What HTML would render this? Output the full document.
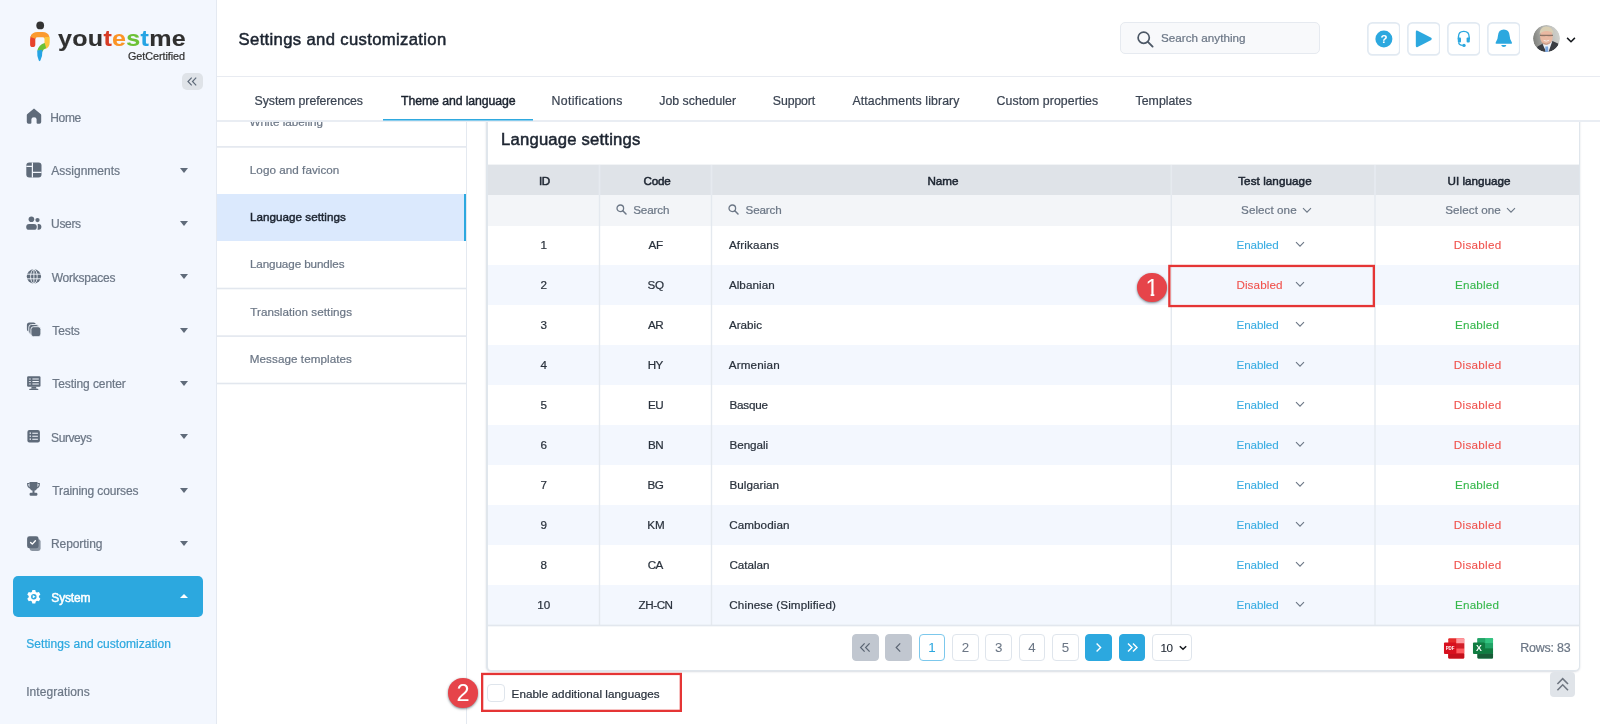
<!DOCTYPE html>
<html lang="en">
<head>
<meta charset="utf-8">
<title>Settings and customization - Language settings</title>
<style>
*{box-sizing:border-box;margin:0;padding:0}
html,body{width:1600px;height:724px;overflow:hidden;background:#fff}
body{position:relative;will-change:transform;-webkit-text-stroke:0.22px;font-family:"Liberation Sans",Arial,sans-serif;font-size:11.67px;color:#1f2733}
a{text-decoration:none;color:inherit}
i{font-style:normal}
.abs{position:absolute}
#sidebar{position:absolute;left:0;top:0;width:217px;height:724px;background:#f3f7fe;border-right:1px solid #e4e9f1}
#brand{position:absolute;left:57.6px;top:24.7px;font-size:22px;font-weight:bold;line-height:28px;letter-spacing:0.25px;white-space:nowrap;transform:scaleX(1.14);transform-origin:0 0;-webkit-text-stroke:0.1px}
#brand .k{color:#303030}#brand .r{color:#d63b25}#brand .o{color:#fb9426}#brand .g{color:#6cc136}#brand .b{color:#25a4e4}
#brand2{position:absolute;left:128px;top:50.4px;font-size:10.8px;line-height:13px;letter-spacing:-0.05px;color:#333;white-space:nowrap}
#collapse{position:absolute;left:182px;top:73px;width:21px;height:17px;border-radius:5px;background:#dfe3e8}
#collapse svg{display:block}
.nav{position:absolute;left:13px;width:190px;height:40px;border-radius:5px;display:block}
.nav .ic{position:absolute}
.nav .lb{position:absolute;left:38px;top:12.5px;line-height:16px;font-size:12px;color:#6c7786;white-space:nowrap}
.nav .ar{position:absolute;left:166.5px;top:17.2px;width:0;height:0;border-left:4.5px solid transparent;border-right:4.5px solid transparent;border-top:5px solid #5f6b7a}
.nav.act{background:#2ca8df;height:40.7px}
.nav.act .lb{top:14px;color:#fff;-webkit-text-stroke:0.5px #fff}
.nav.act .ar{top:18.2px;border-top:none;border-bottom:4.5px solid #fff}
.sub{position:absolute;left:26.5px;line-height:16px;font-size:12px;color:#6c7786;white-space:nowrap}
.sub.on{color:#2ca8df}
#topbar{position:absolute;left:217px;top:0;width:1383px;height:77px;background:#fff}
#ptitle{position:absolute;left:21px;top:27.5px;font-size:16.67px;line-height:24px;font-weight:normal;-webkit-text-stroke:0.5px #1c2430;color:#1c2430;white-space:nowrap}
#gsearch{position:absolute;left:903px;top:22px;width:200px;height:32px;border:1px solid #e6eaf0;border-radius:5px;background:#f8f9fb}
#gsearch>span{position:absolute;left:39.5px;top:7px;line-height:16px;color:#6c7786;white-space:nowrap}
.ibtn{position:absolute;top:21.9px;width:33.6px;height:33.8px;display:block}
.ibtn svg{position:absolute;left:0;top:0;width:33.6px;height:33.8px}
#avatar{position:absolute;left:1316px;top:25px;width:27px;height:27px;border-radius:50%;overflow:hidden}
#avatar svg{display:block}
#tabs{position:absolute;left:217px;top:77px;width:1383px;height:45px;background:#fff}
.tab{position:absolute;top:0;height:45px;line-height:49.4px;font-size:12.3px;color:#3b4452;white-space:nowrap}
.tab.on{color:#1c2430;-webkit-text-stroke:0.45px #1c2430}
#tabline{position:absolute;left:165.5px;top:42px;width:150.5px;height:1px;background:#2fa9df;box-shadow:0 1px 0 #86cced}
#menu{position:absolute;left:217px;top:122px;width:250px;height:602px;background:#fff;border-right:1px solid #e4e9f0;overflow:hidden}
.mi{position:absolute;left:0;width:249px;height:47px;display:block}
.mi>span{position:absolute;left:33px;top:14.8px;line-height:16px;color:#6c7786;white-space:nowrap}
.mi.on{background:#dbe9fd;border-right:2px solid #2ca8df}
.mi.on>span{color:#1c2430;-webkit-text-stroke:0.45px #1c2430}
#card{position:absolute;left:486px;top:100px;width:1094px;border-left-width:2px !important;height:571px;background:#fff;border:1px solid #e0e6ec;border-radius:5px;box-shadow:0 1px 2px rgba(60,80,110,.2);z-index:0}
#tabs,#topbar{z-index:2}
#ctitle{position:absolute;left:13px;top:27px;font-size:16.67px;line-height:24px;font-weight:normal;-webkit-text-stroke:0.5px #1c2430;color:#1c2430;white-space:nowrap}
table{position:absolute;left:0;top:64px;border-collapse:separate;border-spacing:0;table-layout:fixed;width:1091px}
th,td{padding:0;white-space:nowrap;overflow:hidden}
tr.hd th{height:30px;background:#dfe3e8;font-weight:normal;-webkit-text-stroke:0.5px #1c2430;color:#1c2430;text-align:center;line-height:28px;padding-top:1.8px}
tr.fl td{height:31px;background:#f3f5f8;color:#6c7786;line-height:28px;padding-top:0;padding-bottom:0.5px}
tbody td{height:40px;line-height:37px;padding-bottom:1px;color:#2a323d}
tbody tr:first-child td{height:39px;line-height:36px;padding-bottom:2px}
tr.ev td{background:#f3f7fe}
td.c{text-align:center}
td.n{padding-left:17px}
.en{color:#3aade2}.dis{color:#f0524d}.uen{color:#35b84b}
.en,.dis,.uen{-webkit-text-stroke:0.1px}
#pager{position:absolute;left:0;top:525px;width:1091px;height:45px}
.pb{position:absolute;top:8px;width:26.67px;height:26.67px;border-radius:4px;border:1px solid #dfe5ec;text-align:center;line-height:25px;color:#6c7786;font-size:13.3px;display:block;background:#fff;-webkit-text-stroke:0.05px}
.pb svg{position:absolute;left:-1px;top:-1px}
.pb.g{background:#c1c7d0;border-color:#c1c7d0}
.pb.b{background:#2ca8df;border-color:#2ca8df}
.pb.cur{border-color:#7cc8ec;color:#2ca8df}
#rpp{position:absolute;left:664px;top:8px;width:40px;height:26.67px;border:1px solid #dfe5ec;border-radius:4px}
#rpp>span{position:absolute;left:7.4px;top:0;line-height:25px;color:#1f2733;letter-spacing:-0.3px;-webkit-text-stroke:0.1px}
#rpp svg{position:absolute;left:25.4px;top:9.3px}
#rows{position:absolute;left:1033px;top:13.6px;font-size:12.4px;line-height:16px;color:#6c7786;white-space:nowrap}
#addl{position:absolute;left:487px;top:684px;height:18px;display:block}
#addl .cb{position:absolute;left:0;top:0;width:18px;height:18px;border:1px solid #dfe5ec;border-radius:4px;background:#fff}
#addl>span{position:absolute;left:25px;top:1.6px;line-height:16px;color:#2a323d;white-space:nowrap}
#totop{position:absolute;left:1550px;top:672px;width:25px;height:25px;border-radius:4px;background:#e0e4e9;display:block}
#totop svg{display:block}
.hl{position:absolute;z-index:5}
.badge{position:absolute;width:29.6px;height:29.6px;border-radius:50%;background:#e6444a;box-shadow:0 1px 2.5px rgba(20,40,50,.55);z-index:6;color:#fff;text-align:center;font-size:23.5px;line-height:30px;-webkit-text-stroke:0}
.badge span{display:inline-block}
.badge .one{clip-path:polygon(0 0,100% 0,100% 72%,68% 72%,68% 100%,40% 100%,40% 72%,0 72%)}
.si{display:inline-block;vertical-align:middle;margin:0 6.9px 0 0.8px;position:relative;top:-1.6px}
.cv{display:inline-block;vertical-align:middle}
td.s1,td.s2{padding-left:15.8px}
td.sel{padding-left:69px}
td.sel.u{padding-left:69.5px}
td.sel .cv{margin:-0.4px 0 0 5.7px}
td.tl{padding-left:64.5px}
td.tl span{display:inline-block;width:59.5px}
td.tl .cv{margin-top:-2px}
.ln{position:absolute;display:block}
</style>
</head>
<body>
<aside id="sidebar">
<div id="logo">
<svg class="abs" style="left:26px;top:18px" width="28" height="46" viewBox="26 18 28 46" aria-hidden="true">
<circle cx="40.2" cy="25.4" r="3.9" fill="#333"/>
<path d="M32.7 44.4V39.4Q32.7 37.6 33.5 36.6" stroke="#e8432a" stroke-width="5.2" fill="none" stroke-linecap="round"/>
<path d="M32.9 37.9Q33.9 34.7 37.6 34.7H42.6Q46 34.7 47 37.6" stroke="#fb9a2f" stroke-width="5.2" fill="none"/>
<path d="M47.1 36.9V42.4Q47.1 46 43.6 46.7" stroke="#fdc53a" stroke-width="5.2" fill="none"/>
<path d="M45.4 45.4Q41 46.6 39.8 51.2" stroke="#6cc136" stroke-width="5.2" fill="none"/>
<path d="M37.2 50.6L42.5 49.8Q42.6 56 40.4 60.4L39.6 61.2L38.8 60.4Q36.8 56 37.2 50.6Z" fill="#25a4e4"/>
</svg>
<div id="brand"><span class="k">you</span><span class="r">t</span><span class="o">e</span><span class="g">s</span><span class="b">t</span><span class="k">me</span></div>
<div id="brand2">GetCertified</div>
</div>
<div id="collapse"><svg width="21" height="17" viewBox="0 0 21 17" aria-hidden="true"><path d="M9.7 4.7L6 8.5L9.7 12.3M14.2 4.7L10.5 8.5L14.2 12.3" stroke="#5f6b7a" stroke-width="1.2" fill="none"/></svg></div>
<nav>
<a class="nav" style="top:97px"><svg class="ic" style="left:13.2px;top:10.9px" width="16" height="16" viewBox="0 0 16 16" aria-hidden="true"><path fill="#5f6b7a" d="M8 0.6 L14.6 5.9 Q15.2 6.4 15.2 7.2 V14 Q15.2 15.7 13.5 15.7 H11.6 Q10.6 15.7 10.6 14.7 V11.3 Q10.6 9.2 8 9.2 Q5.4 9.2 5.4 11.3 V14.7 Q5.4 15.7 4.4 15.7 H2.5 Q0.8 15.7 0.8 14 V7.2 Q0.8 6.4 1.4 5.9 Z"/></svg><span class="lb"><span style="letter-spacing:-0.33px;position:relative;left:-0.8px">Home</span></span></a>
<a class="nav" style="top:150.33px"><svg class="ic" style="left:13px;top:12px" width="16" height="16" viewBox="0 0 16 16" aria-hidden="true"><rect x="0.3" y="0.4" width="15.2" height="15.2" rx="3" fill="#5f6b7a"/><path d="M6.4 0.4V15.6M0.3 4.4H6.4M6.4 10.4H15.5" stroke="#f3f7fe" stroke-width="1.2" fill="none"/></svg><span class="lb"><span style="position:relative;left:0.3px">Assignments</span></span><i class=ar></i></a>
<a class="nav" style="top:203.67px"><svg class="ic" style="left:13px;top:12px" width="16" height="16" viewBox="0 0 16 16" aria-hidden="true"><circle cx="5.4" cy="3.3" r="2.8" fill="#5f6b7a"/><circle cx="11.5" cy="4.1" r="2.15" fill="#5f6b7a"/><rect x="0.2" y="7.9" width="10.6" height="5.9" rx="2.9" fill="#5f6b7a"/><path fill="#5f6b7a" d="M11.7 7.9H12.6Q15.4 7.9 15.4 10.85Q15.4 13.8 12.6 13.8H11.5Q11.8 12.4 11.8 10.85Q11.8 9.3 11.7 7.9Z"/></svg><span class="lb"><span style="letter-spacing:-0.35px;position:relative;left:0.1px">Users</span></span><i class=ar></i></a>
<a class="nav" style="top:257px"><svg class="ic" style="left:13px;top:12px" width="16" height="16" viewBox="0 0 16 16" aria-hidden="true"><circle cx="7.9" cy="7.5" r="7.15" fill="#5f6b7a"/><path d="M0.7 5.2H15.1M0.7 9.8H15.1M7.9 0.3V14.7" stroke="#f3f7fe" stroke-width="0.9" fill="none"/><ellipse cx="7.9" cy="7.5" rx="3.3" ry="7.15" stroke="#f3f7fe" stroke-width="0.9" fill="none"/></svg><span class="lb"><span style="letter-spacing:-0.23px;position:relative;left:0.7px">Workspaces</span></span><i class=ar></i></a>
<a class="nav" style="top:310.33px"><svg class="ic" style="left:13px;top:12px" width="16" height="16" viewBox="0 0 16 16" aria-hidden="true"><rect x="0.9" y="0.5" width="9" height="9" rx="2.5" fill="#5f6b7a"/><rect x="2.8" y="2.5" width="10" height="10" rx="2.7" fill="#5f6b7a" stroke="#f3f7fe" stroke-width="0.9"/><rect x="4.9" y="4.7" width="10" height="10" rx="2.7" fill="#5f6b7a" stroke="#f3f7fe" stroke-width="0.9"/></svg><span class="lb"><span style="letter-spacing:-0.11px;position:relative;left:1.3px">Tests</span></span><i class=ar></i></a>
<a class="nav" style="top:363.67px"><svg class="ic" style="left:13px;top:12px" width="16" height="16" viewBox="0 0 16 16" aria-hidden="true"><rect x="1.1" y="0.2" width="13.4" height="10.6" rx="1.2" fill="#5f6b7a"/><path d="M6.4 3H12.8M6.4 5.5H12.8M6.4 8H12.8" stroke="#f3f7fe" stroke-width="1.1"/><path d="M2.9 3H5M2.9 5.5H5M2.9 8H5" stroke="#f3f7fe" stroke-width="1.1" stroke-dasharray="0.9 0.5"/><path fill="#5f6b7a" d="M5.6 10.8H10L10.5 12.8H5.1Z"/><rect x="3.2" y="12.7" width="9.2" height="1.4" rx="0.7" fill="#5f6b7a"/></svg><span class="lb"><span style="letter-spacing:-0.09px;position:relative;left:1.3px">Testing center</span></span><i class=ar></i></a>
<a class="nav" style="top:417px"><svg class="ic" style="left:13px;top:12px" width="16" height="16" viewBox="0 0 16 16" aria-hidden="true"><rect x="1.4" y="1" width="12.5" height="12.4" rx="2" fill="#5f6b7a"/><path d="M6.3 4.2H11.9M6.3 7.2H11.9M6.3 10.2H11.9" stroke="#f3f7fe" stroke-width="1.1"/><path d="M3.6 4.2H5M3.6 7.2H5M3.6 10.2H5" stroke="#f3f7fe" stroke-width="1.2"/></svg><span class="lb"><span style="letter-spacing:-0.42px;position:relative;left:0.1px">Surveys</span></span><i class=ar></i></a>
<a class="nav" style="top:470.33px"><svg class="ic" style="left:13px;top:12px" width="16" height="16" viewBox="0 0 16 16" aria-hidden="true"><path fill="#5f6b7a" d="M3.5 0H11.5V4.2Q11.5 8.4 7.5 8.8Q3.5 8.4 3.5 4.2Z"/><path d="M3.5 1.5H1.7Q1.5 5.4 4.6 6.1M11.5 1.5H13.3Q13.5 5.4 10.4 6.1" stroke="#5f6b7a" stroke-width="1.2" fill="none"/><rect x="6.5" y="8.2" width="2" height="2.8" fill="#5f6b7a"/><rect x="3.6" y="10.8" width="7.8" height="2.9" rx="1.2" fill="#5f6b7a"/></svg><span class="lb"><span style="letter-spacing:-0.14px;position:relative;left:1.3px">Training courses</span></span><i class=ar></i></a>
<a class="nav" style="top:523.67px"><svg class="ic" style="left:13px;top:12px" width="16" height="16" viewBox="0 0 16 16" aria-hidden="true"><rect x="3.6" y="3.2" width="11" height="11.8" rx="2.4" fill="#8a94a1"/><rect x="1.1" y="0.3" width="11.5" height="12" rx="2.4" fill="#5f6b7a"/><path d="M4.6 6.4L6.3 8.1L9.4 4.7" stroke="#fff" stroke-width="1.4" fill="none" stroke-linecap="round" stroke-linejoin="round"/></svg><span class="lb"><span style="letter-spacing:-0.06px;position:relative;left:-0.1px">Reporting</span></span><i class=ar></i></a>
<a class="nav act" style="top:576.3px"><svg class="ic" style="left:13px;top:12.7px" width="16" height="16" viewBox="0 0 16 16" aria-hidden="true"><g transform="translate(-0.5 -0.65) scale(1.04)"><path fill="#fff" fill-rule="evenodd" d="M6.6 0.8H9.4L9.9 2.7L11 3.3L12.9 2.8L14.3 5.2L12.9 6.6V7.9L14.3 9.3L12.9 11.7L11 11.2L9.9 11.8L9.4 13.7H6.6L6.1 11.8L5 11.2L3.1 11.7L1.7 9.3L3.1 7.9V6.6L1.7 5.2L3.1 2.8L5 3.3L6.1 2.7ZM8 4.6A2.65 2.65 0 1 0 8 9.9A2.65 2.65 0 1 0 8 4.6Z" transform="translate(0 0.75)"/><path fill="#fff" d="M7 6.4L9.6 8L7 9.6Z"/></g></svg><span class="lb"><span style="letter-spacing:-0.17px;position:relative;left:0.3px">System</span></span><i class="ar"></i></a>
<a class="sub on" style="top:636.4px"><span style="letter-spacing:0.05px;position:relative;left:-0.2px">Settings and customization</span></a>
<a class="sub" style="top:683.5px"><span style="letter-spacing:0.07px;position:relative;left:-0.3px">Integrations</span></a>
</nav>
</aside>
<header id="topbar">
<h1 id="ptitle"><span style="letter-spacing:0.34px;position:relative;left:0.6px">Settings and customization</span></h1>
<div id="gsearch"><svg class="abs" style="left:15px;top:7px" width="19" height="19" viewBox="0 0 19 19" aria-hidden="true"><circle cx="7.7" cy="7.7" r="5.6" stroke="#4d5866" stroke-width="1.7" fill="none"/><path d="M11.9 11.9L16.6 16.6" stroke="#4d5866" stroke-width="1.9" stroke-linecap="round"/></svg><span><span style="letter-spacing:0.03px;position:relative;left:0.4px">Search anything</span></span></div>
<a class="ibtn" style="left:1149.7px"><svg viewBox="0 0 33.6 33.8" aria-hidden="true"><rect x="0.85" y="0.85" width="31.9" height="32.1" rx="4.6" fill="#fff" stroke="#e2eaf2" stroke-width="1.7"/><circle cx="16.9" cy="16.9" r="8.5" fill="#2ca8df"/><text x="16.9" y="20.9" text-anchor="middle" font-family="Liberation Sans, sans-serif" font-weight="bold" font-size="11.5" fill="#fff">?</text></svg></a>
<a class="ibtn" style="left:1189.7px"><svg viewBox="0 0 33.6 33.8" aria-hidden="true"><rect x="0.85" y="0.85" width="31.9" height="32.1" rx="4.6" fill="#fff" stroke="#e2eaf2" stroke-width="1.7"/><path d="M8.8 10Q8.8 8 10.6 8.8L24.2 15.8Q25.4 16.9 24.2 18L10.6 25Q8.8 25.8 8.8 23.8Z" fill="#2ca8df"/></svg></a>
<a class="ibtn" style="left:1229.7px"><svg viewBox="0 0 33.6 33.8" aria-hidden="true"><rect x="0.85" y="0.85" width="31.9" height="32.1" rx="4.6" fill="#fff" stroke="#e2eaf2" stroke-width="1.7"/><path d="M11.4 17.6V15.2Q11.4 9.4 16.8 9.4Q22.2 9.4 22.2 15.2V17.6" stroke="#2ca8df" stroke-width="1.4" fill="none"/><rect x="10.8" y="15.4" width="3.2" height="5.2" rx="1" fill="#2ca8df"/><rect x="19.6" y="15.4" width="3.2" height="5.2" rx="1" fill="#2ca8df"/><path d="M11.6 20.4Q11.8 23.2 15.8 23.4" stroke="#2ca8df" stroke-width="1.2" fill="none"/><circle cx="17" cy="23.4" r="1.7" fill="#2ca8df"/></svg></a>
<a class="ibtn" style="left:1269.7px"><svg viewBox="0 0 33.6 33.8" aria-hidden="true"><rect x="0.85" y="0.85" width="31.9" height="32.1" rx="4.6" fill="#fff" stroke="#e2eaf2" stroke-width="1.7"/><path d="M16.8 7.6Q22.2 7.6 22.6 13.6Q22.8 18.2 24.9 20.4Q25.5 21.8 24.1 21.8H9.5Q8.1 21.8 8.7 20.4Q10.8 18.2 11 13.6Q11.4 7.6 16.8 7.6Z" fill="#2ca8df"/><path d="M14.2 23H19.4Q19 25 16.8 25Q14.6 25 14.2 23Z" fill="#2ca8df"/></svg></a>
<div id="avatar"><svg width="27" height="27" viewBox="0 0 27 27" aria-hidden="true"><defs><clipPath id="avc"><circle cx="13.5" cy="13.5" r="13.4"/></clipPath><linearGradient id="avg" x1="0" y1="0.5" x2="1" y2="0.3"><stop offset="0" stop-color="#7f807c"/><stop offset="0.45" stop-color="#b5b6b2"/><stop offset="1" stop-color="#d2d3cf"/></linearGradient><filter id="avb" x="-10%" y="-10%" width="120%" height="120%"><feGaussianBlur stdDeviation="0.55"/></filter></defs><g clip-path="url(#avc)"><rect width="27" height="27" fill="url(#avg)"/><g filter="url(#avb)"><path d="M3 27L4.5 21.5L10 18.5L13 24L19.5 16L25 18.5L27 27Z" fill="#3b3d43"/><path d="M9.6 19L13.2 27H15.5L19.2 16.6L14 20Z" fill="#eef1f6"/><path d="M12.4 21.4H15L15.4 27H12.2Z" fill="#7aa6e0"/><ellipse cx="13.4" cy="11.6" rx="6.3" ry="8.2" fill="#e9b9a2"/><path d="M6.6 9.6Q6.4 2.4 12.6 1.6Q19.6 1.2 20.6 8.8Q18 5.6 13.4 6Q8.8 6 6.6 9.6Z" fill="#d9cfb4"/><path d="M7 10.3H20" stroke="#6b5a50" stroke-width="0.9"/><path d="M8.2 10.6H12.2M14.6 10.6H18.6" stroke="#8d7466" stroke-width="1.4" opacity="0.6"/><path d="M10.6 15.4Q13.4 17 16.2 15.2" stroke="#f7ece6" stroke-width="1" fill="none"/><path d="M9.4 17.8Q13 20.6 17.4 17.6" stroke="#b98a78" stroke-width="1" fill="none" opacity="0.7"/></g></g></svg></div>
<svg class="abs" style="left:1347.6px;top:34.6px" width="12" height="10" viewBox="0 0 12 10" aria-hidden="true"><path d="M2.1 2.9L6 6.7L9.9 2.9" stroke="#15181d" stroke-width="1.5" fill="none"/></svg>
<i class="ln" style="left:0px;top:76px;width:1383px;height:1px;background:rgba(230,234,240,0.93)"></i><i class="ln" style="left:0px;top:77px;width:1383px;height:1px;background:rgba(230,234,240,0.73)"></i>
</header>
<nav id="tabs">
<a class="tab" style="left:37.7px"><span style="letter-spacing:-0.06px;position:relative;left:-0.1px">System preferences</span></a>
<a class="tab on" style="left:183.3px"><span style="letter-spacing:-0.09px;position:relative;left:0.7px">Theme and language</span></a>
<a class="tab" style="left:334.9px"><span style="letter-spacing:0.32px;position:relative;left:-0.3px">Notifications</span></a>
<a class="tab" style="left:442.0px"><span style="letter-spacing:0.01px;position:relative;left:0.3px">Job scheduler</span></a>
<a class="tab" style="left:555.8px"><span style="letter-spacing:-0.10px">Support</span></a>
<a class="tab" style="left:635.5px"><span style="letter-spacing:0.10px;position:relative;left:-0.1px">Attachments library</span></a>
<a class="tab" style="left:779.6px"><span style="letter-spacing:0.07px">Custom properties</span></a>
<a class="tab" style="left:918.0px"><span style="letter-spacing:0.02px;position:relative;left:0.6px">Templates</span></a>
<i class="ln" style="left:0px;top:43px;width:1383px;height:1px;background:rgba(228,233,240,0.83)"></i><i class="ln" style="left:0px;top:44px;width:1383px;height:1px;background:rgba(228,233,240,0.83)"></i>
<i id="tabline"></i>
</nav>
<div id="menu">
<a class="mi" style="top:-22.4px"><span><span style="letter-spacing:0.02px;position:relative;left:-0.5px">White labeling</span></span></a>
<a class="mi" style="top:25.0px"><span><span style="letter-spacing:0.05px;position:relative;left:-0.2px">Logo and favicon</span></span></a>
<a class="mi on" style="top:72.0px"><span><span style="letter-spacing:0.04px;position:relative;left:-0.1px">Language settings</span></span></a>
<a class="mi" style="top:119.7px"><span><span style="letter-spacing:-0.09px;position:relative;left:-0.1px">Language bundles</span></span></a>
<a class="mi" style="top:167.0px"><span><span style="letter-spacing:0.06px;position:relative;left:0.2px">Translation settings</span></span></a>
<a class="mi" style="top:214.4px"><span><span style="letter-spacing:0.06px;position:relative;left:-0.2px">Message templates</span></span></a>
<i class="ln" style="left:0px;top:24px;width:249px;height:1px;background:rgba(226,231,238,0.90)"></i><i class="ln" style="left:0px;top:25px;width:249px;height:1px;background:rgba(226,231,238,0.70)"></i>
<i class="ln" style="left:0px;top:165px;width:249px;height:1px;background:rgba(226,231,238,0.30)"></i><i class="ln" style="left:0px;top:166px;width:249px;height:1px;background:rgba(226,231,238,1.00)"></i><i class="ln" style="left:0px;top:167px;width:249px;height:1px;background:rgba(226,231,238,0.30)"></i>
<i class="ln" style="left:0px;top:213px;width:249px;height:1px;background:rgba(226,231,238,0.70)"></i><i class="ln" style="left:0px;top:214px;width:249px;height:1px;background:rgba(226,231,238,0.90)"></i>
<i class="ln" style="left:0px;top:260px;width:249px;height:1px;background:rgba(226,231,238,0.30)"></i><i class="ln" style="left:0px;top:261px;width:249px;height:1px;background:rgba(226,231,238,1.00)"></i><i class="ln" style="left:0px;top:262px;width:249px;height:1px;background:rgba(226,231,238,0.30)"></i>
</div>
<section id="card">
<h2 id="ctitle"><span style="letter-spacing:0.19px;position:relative;left:0.1px">Language settings</span></h2>
<table>
<colgroup><col style="width:111.5px"><col style="width:112px"><col style="width:459.8px"><col style="width:203.7px"><col style="width:204px"></colgroup>
<thead>
<tr class="hd"><th><span style="letter-spacing:-0.44px;position:relative;left:0.7px">ID</span></th><th><span style="letter-spacing:-0.25px;position:relative;left:1.5px">Code</span></th><th><span style="letter-spacing:-0.01px;position:relative;left:1.6px">Name</span></th><th><span style="letter-spacing:0.07px;position:relative;left:1.8px">Test language</span></th><th><span style="letter-spacing:0.01px;position:relative;left:2.1px">UI language</span></th></tr>
<tr class="fl"><td></td><td class="s1"><svg class="si" width="11" height="11" viewBox="0 0 11 11" aria-hidden="true"><circle cx="4.3" cy="4.3" r="3.3" stroke="#6c7786" stroke-width="1.3" fill="none"/><path d="M6.8 6.8L10 10" stroke="#6c7786" stroke-width="1.5" stroke-linecap="round"/></svg><span style="letter-spacing:-0.12px;position:relative;left:-0.8px">Search</span></td><td class="s2"><svg class="si" width="11" height="11" viewBox="0 0 11 11" aria-hidden="true"><circle cx="4.3" cy="4.3" r="3.3" stroke="#6c7786" stroke-width="1.3" fill="none"/><path d="M6.8 6.8L10 10" stroke="#6c7786" stroke-width="1.5" stroke-linecap="round"/></svg><span style="letter-spacing:-0.18px;position:relative;left:-0.4px">Search</span></td><td class="sel"><span style="letter-spacing:0.05px;position:relative;left:0.8px">Select one</span><svg class="cv" width="10" height="7" viewBox="0 0 10 7" aria-hidden="true"><path d="M1 1.2L5 5.2L9 1.2" stroke="#6c7786" stroke-width="1.1" fill="none"/></svg></td><td class="sel u"><span style="letter-spacing:0.04px;position:relative;left:0.8px">Select one</span><svg class="cv" width="10" height="7" viewBox="0 0 10 7" aria-hidden="true"><path d="M1 1.2L5 5.2L9 1.2" stroke="#6c7786" stroke-width="1.1" fill="none"/></svg></td></tr>
</thead>
<tbody>
<tr class="od"><td class="c">1</td><td class="c"><span style="letter-spacing:-0.45px;position:relative;left:0.1px">AF</span></td><td class="n"><span style="letter-spacing:0.16px;position:relative;left:0.4px">Afrikaans</span></td><td class="tl"><span class="en" style="letter-spacing:-0.12px;position:relative;left:0.8px">Enabled</span><svg class="cv" width="10" height="7" viewBox="0 0 10 7" aria-hidden="true"><path d="M1 1.2L5 5.2L9 1.2" stroke="#6c7786" stroke-width="1.1" fill="none"/></svg></td><td class="c ul"><span class="dis" style="letter-spacing:0.29px;position:relative;left:0.7px">Disabled</span></td></tr>
<tr class="ev"><td class="c">2</td><td class="c"><span style="letter-spacing:-0.45px;position:relative;left:0.1px">SQ</span></td><td class="n"><span style="letter-spacing:0.06px;position:relative;left:0.4px">Albanian</span></td><td class="tl"><span class="dis" style="letter-spacing:0.11px;position:relative;left:0.6px">Disabled</span><svg class="cv" width="10" height="7" viewBox="0 0 10 7" aria-hidden="true"><path d="M1 1.2L5 5.2L9 1.2" stroke="#6c7786" stroke-width="1.1" fill="none"/></svg></td><td class="c ul"><span class="uen" style="letter-spacing:0.21px;position:relative;left:0.1px">Enabled</span></td></tr>
<tr class="od"><td class="c">3</td><td class="c"><span style="letter-spacing:-0.45px;position:relative;left:0.1px">AR</span></td><td class="n"><span style="letter-spacing:0.02px;position:relative;left:0.4px">Arabic</span></td><td class="tl"><span class="en" style="letter-spacing:-0.12px;position:relative;left:0.8px">Enabled</span><svg class="cv" width="10" height="7" viewBox="0 0 10 7" aria-hidden="true"><path d="M1 1.2L5 5.2L9 1.2" stroke="#6c7786" stroke-width="1.1" fill="none"/></svg></td><td class="c ul"><span class="uen" style="letter-spacing:0.21px;position:relative;left:0.1px">Enabled</span></td></tr>
<tr class="ev"><td class="c">4</td><td class="c"><span style="letter-spacing:-0.45px;position:relative;left:-0.2px">HY</span></td><td class="n"><span style="letter-spacing:0.14px;position:relative;left:0.3px">Armenian</span></td><td class="tl"><span class="en" style="letter-spacing:-0.12px;position:relative;left:0.8px">Enabled</span><svg class="cv" width="10" height="7" viewBox="0 0 10 7" aria-hidden="true"><path d="M1 1.2L5 5.2L9 1.2" stroke="#6c7786" stroke-width="1.1" fill="none"/></svg></td><td class="c ul"><span class="dis" style="letter-spacing:0.29px;position:relative;left:0.7px">Disabled</span></td></tr>
<tr class="od"><td class="c">5</td><td class="c"><span style="letter-spacing:-0.45px;position:relative;left:0.1px">EU</span></td><td class="n"><span style="letter-spacing:-0.20px;position:relative;left:1.0px">Basque</span></td><td class="tl"><span class="en" style="letter-spacing:-0.12px;position:relative;left:0.8px">Enabled</span><svg class="cv" width="10" height="7" viewBox="0 0 10 7" aria-hidden="true"><path d="M1 1.2L5 5.2L9 1.2" stroke="#6c7786" stroke-width="1.1" fill="none"/></svg></td><td class="c ul"><span class="dis" style="letter-spacing:0.29px;position:relative;left:0.7px">Disabled</span></td></tr>
<tr class="ev"><td class="c">6</td><td class="c"><span style="letter-spacing:-0.45px;position:relative;left:0.2px">BN</span></td><td class="n"><span style="letter-spacing:-0.05px;position:relative;left:1.0px">Bengali</span></td><td class="tl"><span class="en" style="letter-spacing:-0.12px;position:relative;left:0.8px">Enabled</span><svg class="cv" width="10" height="7" viewBox="0 0 10 7" aria-hidden="true"><path d="M1 1.2L5 5.2L9 1.2" stroke="#6c7786" stroke-width="1.1" fill="none"/></svg></td><td class="c ul"><span class="dis" style="letter-spacing:0.29px;position:relative;left:0.7px">Disabled</span></td></tr>
<tr class="od"><td class="c">7</td><td class="c"><span style="letter-spacing:-0.45px">BG</span></td><td class="n"><span style="letter-spacing:0.04px;position:relative;left:1.0px">Bulgarian</span></td><td class="tl"><span class="en" style="letter-spacing:-0.12px;position:relative;left:0.8px">Enabled</span><svg class="cv" width="10" height="7" viewBox="0 0 10 7" aria-hidden="true"><path d="M1 1.2L5 5.2L9 1.2" stroke="#6c7786" stroke-width="1.1" fill="none"/></svg></td><td class="c ul"><span class="uen" style="letter-spacing:0.21px;position:relative;left:0.1px">Enabled</span></td></tr>
<tr class="ev"><td class="c">9</td><td class="c"><span style="letter-spacing:-0.18px;position:relative;left:0.4px">KM</span></td><td class="n"><span style="letter-spacing:0.08px;position:relative;left:0.7px">Cambodian</span></td><td class="tl"><span class="en" style="letter-spacing:-0.12px;position:relative;left:0.8px">Enabled</span><svg class="cv" width="10" height="7" viewBox="0 0 10 7" aria-hidden="true"><path d="M1 1.2L5 5.2L9 1.2" stroke="#6c7786" stroke-width="1.1" fill="none"/></svg></td><td class="c ul"><span class="dis" style="letter-spacing:0.29px;position:relative;left:0.7px">Disabled</span></td></tr>
<tr class="od"><td class="c">8</td><td class="c"><span style="letter-spacing:-0.45px;position:relative;left:-0.2px">CA</span></td><td class="n"><span style="letter-spacing:-0.02px;position:relative;left:0.9px">Catalan</span></td><td class="tl"><span class="en" style="letter-spacing:-0.12px;position:relative;left:0.8px">Enabled</span><svg class="cv" width="10" height="7" viewBox="0 0 10 7" aria-hidden="true"><path d="M1 1.2L5 5.2L9 1.2" stroke="#6c7786" stroke-width="1.1" fill="none"/></svg></td><td class="c ul"><span class="dis" style="letter-spacing:0.29px;position:relative;left:0.7px">Disabled</span></td></tr>
<tr class="ev"><td class="c">10</td><td class="c"><span style="letter-spacing:-0.45px;position:relative;left:0.1px">ZH-CN</span></td><td class="n"><span style="letter-spacing:0.12px;position:relative;left:0.8px">Chinese (Simplified)</span></td><td class="tl"><span class="en" style="letter-spacing:-0.12px;position:relative;left:0.8px">Enabled</span><svg class="cv" width="10" height="7" viewBox="0 0 10 7" aria-hidden="true"><path d="M1 1.2L5 5.2L9 1.2" stroke="#6c7786" stroke-width="1.1" fill="none"/></svg></td><td class="c ul"><span class="uen" style="letter-spacing:0.21px;position:relative;left:0.1px">Enabled</span></td></tr>
</tbody>
</table>
<i class="ln" style="left:0;top:63px;width:1091px;height:1px;background:rgba(223,227,232,.4)"></i>
<i class="ln" style="left:110px;top:64px;width:1px;height:30px;background:rgba(230,234,239,0.34)"></i><i class="ln" style="left:111px;top:64px;width:1px;height:30px;background:rgba(230,234,239,1.00)"></i><i class="ln" style="left:112px;top:64px;width:1px;height:30px;background:rgba(230,234,239,0.34)"></i>
<i class="ln" style="left:110px;top:94px;width:1px;height:430px;background:rgba(228,233,239,0.20)"></i><i class="ln" style="left:111px;top:94px;width:1px;height:430px;background:rgba(228,233,239,1.00)"></i><i class="ln" style="left:112px;top:94px;width:1px;height:430px;background:rgba(228,233,239,0.20)"></i>
<i class="ln" style="left:222px;top:64px;width:1px;height:30px;background:rgba(230,234,239,0.34)"></i><i class="ln" style="left:223px;top:64px;width:1px;height:30px;background:rgba(230,234,239,1.00)"></i><i class="ln" style="left:224px;top:64px;width:1px;height:30px;background:rgba(230,234,239,0.34)"></i>
<i class="ln" style="left:222px;top:94px;width:1px;height:430px;background:rgba(228,233,239,0.20)"></i><i class="ln" style="left:223px;top:94px;width:1px;height:430px;background:rgba(228,233,239,1.00)"></i><i class="ln" style="left:224px;top:94px;width:1px;height:430px;background:rgba(228,233,239,0.20)"></i>
<i class="ln" style="left:682px;top:64px;width:1px;height:30px;background:rgba(230,234,239,0.54)"></i><i class="ln" style="left:683px;top:64px;width:1px;height:30px;background:rgba(230,234,239,1.00)"></i><i class="ln" style="left:684px;top:64px;width:1px;height:30px;background:rgba(230,234,239,0.13)"></i>
<i class="ln" style="left:682px;top:94px;width:1px;height:430px;background:rgba(228,233,239,0.40)"></i><i class="ln" style="left:683px;top:94px;width:1px;height:430px;background:rgba(228,233,239,1.00)"></i>
<i class="ln" style="left:886px;top:64px;width:1px;height:30px;background:rgba(230,234,239,0.84)"></i><i class="ln" style="left:887px;top:64px;width:1px;height:30px;background:rgba(230,234,239,0.84)"></i>
<i class="ln" style="left:886px;top:94px;width:1px;height:430px;background:rgba(228,233,239,0.70)"></i><i class="ln" style="left:887px;top:94px;width:1px;height:430px;background:rgba(228,233,239,0.70)"></i>
<i class="ln" style="left:0px;top:523px;width:1091px;height:1px;background:rgba(226,231,238,0.34)"></i><i class="ln" style="left:0px;top:524px;width:1091px;height:1px;background:rgba(226,231,238,1.00)"></i><i class="ln" style="left:0px;top:525px;width:1091px;height:1px;background:rgba(226,231,238,0.34)"></i>
<div id="pager">
<a class="pb g" style="left:364.00px"><svg width="27" height="27" viewBox="0 0 27 27" aria-hidden="true"><path d="M12.6 9.4L8.6 13.5L12.6 17.6M17.6 9.4L13.6 13.5L17.6 17.6" stroke="#5b6573" stroke-width="1.2" fill="none"/></svg></a>
<a class="pb g" style="left:397.33px"><svg width="27" height="27" viewBox="0 0 27 27" aria-hidden="true"><path d="M15.2 9.4L11.2 13.5L15.2 17.6" stroke="#5b6573" stroke-width="1.2" fill="none"/></svg></a>
<a class="pb cur" style="left:430.67px">1</a>
<a class="pb n" style="left:464.00px">2</a>
<a class="pb n" style="left:497.33px">3</a>
<a class="pb n" style="left:530.66px">4</a>
<a class="pb n" style="left:564.00px">5</a>
<a class="pb b" style="left:597.33px"><svg width="27" height="27" viewBox="0 0 27 27" aria-hidden="true"><path d="M11.6 9.4L15.6 13.5L11.6 17.6" stroke="#fff" stroke-width="1.4" fill="none"/></svg></a>
<a class="pb b" style="left:630.66px"><svg width="27" height="27" viewBox="0 0 27 27" aria-hidden="true"><path d="M9 9.4L13 13.5L9 17.6M14 9.4L18 13.5L14 17.6" stroke="#fff" stroke-width="1.4" fill="none"/></svg></a>
<div id="rpp"><span>10</span><svg width="10" height="8" viewBox="0 0 10 8" aria-hidden="true"><path d="M1.8 2.2L5 5.3L8.2 2.2" stroke="#15181d" stroke-width="1.5" fill="none"/></svg></div>
<svg class="abs" style="left:955.4px;top:11px" width="22.4" height="22.6" viewBox="0 0 23 23" preserveAspectRatio="none" aria-hidden="true"><rect x="5.4" y="1.2" width="16.4" height="20.6" rx="1" fill="#e52a2a"/><rect x="13.6" y="1.2" width="8.2" height="5.4" fill="#ff9aa0"/><rect x="13.6" y="6.6" width="8.2" height="5.2" fill="#d11f2b"/><rect x="13.6" y="11.8" width="8.2" height="5" fill="#ff5a5f"/><rect x="5.4" y="16.8" width="16.4" height="5" rx="1" fill="#c4101c"/><rect x="1" y="5.6" width="12.6" height="11.6" rx="1" fill="#d8101e"/><text x="7.3" y="13.2" text-anchor="middle" font-family="Liberation Sans, sans-serif" font-weight="bold" font-size="4.6" fill="#fff">PDF</text></svg>
<svg class="abs" style="left:984.2px;top:11px" width="22.4" height="22.6" viewBox="0 0 23 23" preserveAspectRatio="none" aria-hidden="true"><rect x="5.6" y="1.2" width="16" height="20.6" rx="1" fill="#21a366"/><rect x="5.6" y="1.2" width="8" height="5.2" fill="#21a366"/><rect x="13.6" y="1.2" width="8" height="5.2" fill="#33c481"/><rect x="5.6" y="6.4" width="8" height="5.2" fill="#107c41"/><rect x="13.6" y="6.4" width="8" height="5.2" fill="#21a366"/><rect x="5.6" y="11.6" width="16" height="5.2" fill="#107c41"/><rect x="5.6" y="16.8" width="16" height="5" rx="1" fill="#185c37"/><rect x="1" y="5.6" width="12" height="11.6" rx="1" fill="#107c41"/><text x="7" y="14.6" text-anchor="middle" font-family="Liberation Sans, sans-serif" font-weight="bold" font-size="9" fill="#fff">X</text></svg>
<span id="rows"><span style="letter-spacing:-0.16px;position:relative;left:-0.8px">Rows: 83</span></span>
</div>
</section>
<label id="addl"><i class="cb"></i><span><span style="letter-spacing:0.06px;position:relative;left:-0.4px">Enable additional languages</span></span></label>
<a id="totop"><svg width="25" height="25" viewBox="0 0 25 25" aria-hidden="true"><path d="M7.4 12L12.7 6.6L18 12M7.4 18.2L12.7 12.8L18 18.2" stroke="#6f7680" stroke-width="1.6" fill="none"/></svg></a>
<svg class="hl" style="left:1167px;top:263px" width="209" height="46" viewBox="1167 263 209 46" aria-hidden="true"><rect x="1169.35" y="265.95" width="204.50" height="40.10" fill="none" stroke="#e53535" stroke-width="2.3"/></svg>
<svg class="hl" style="left:480px;top:671px" width="203" height="42" viewBox="480 671 203 42" aria-hidden="true"><rect x="482.15" y="673.95" width="198.70" height="36.90" fill="none" stroke="#e53535" stroke-width="2.3"/></svg>
<div class="badge" style="left:1137.2px;top:272.5px"><span class="one">1</span></div>
<div class="badge" style="left:448.2px;top:678.3px"><span>2</span></div>
</body>
</html>
